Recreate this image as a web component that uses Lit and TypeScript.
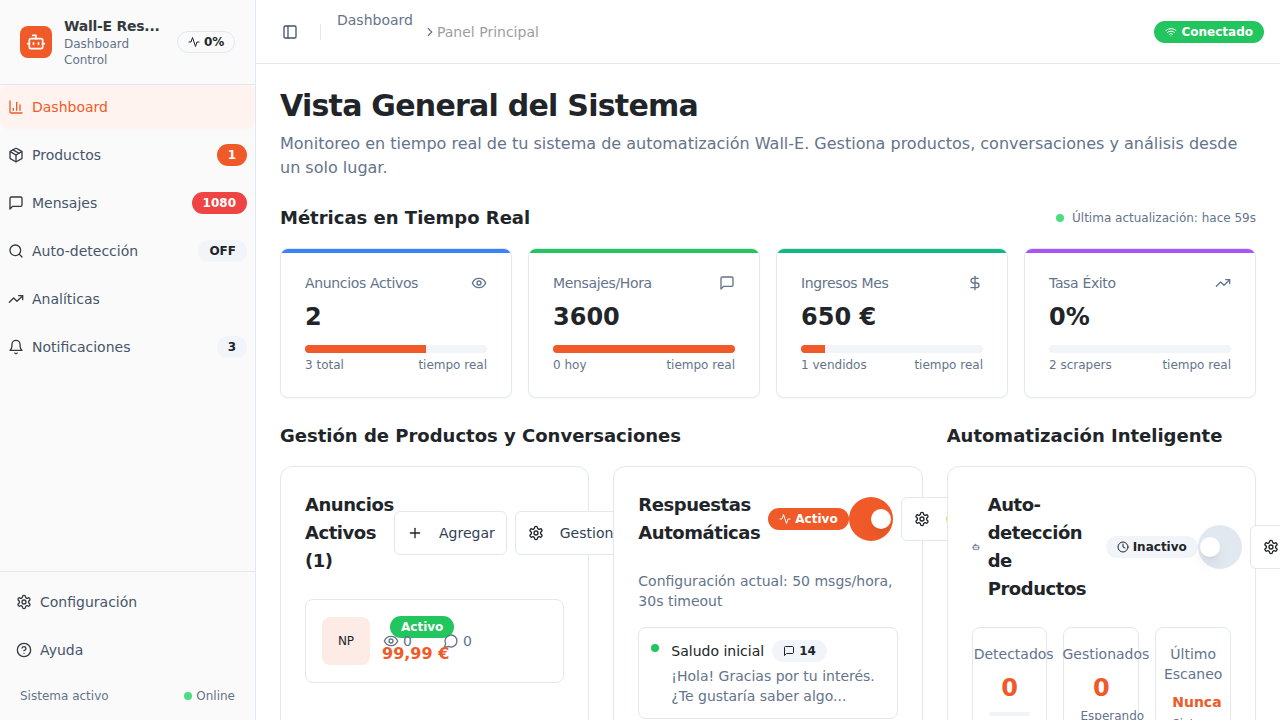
import { LitElement, html, css, svg } from "lit";
import { customElement } from "lit/decorators.js";

const ICONS: Record<string, unknown> = {
  bot: svg`<path d="M12 8V4H8"/><rect width="16" height="12" x="4" y="8" rx="2"/><path d="M2 14h2"/><path d="M20 14h2"/><path d="M15 13v2"/><path d="M9 13v2"/>`,
  activity: svg`<path d="M22 12h-4l-3 9L9 3l-3 9H2"/>`,
  chart: svg`<path d="M3 3v16a2 2 0 0 0 2 2h16"/><path d="M18 17V9"/><path d="M13 17V5"/><path d="M8 17v-3"/>`,
  box: svg`<path d="M11 21.73a2 2 0 0 0 2 0l7-4A2 2 0 0 0 21 16V8a2 2 0 0 0-1-1.73l-7-4a2 2 0 0 0-2 0l-7 4A2 2 0 0 0 3 8v8a2 2 0 0 0 1 1.73z"/><path d="M12 22V12"/><polyline points="3.29 7 12 12 20.71 7"/><path d="m7.5 4.27 9 5.15"/>`,
  msg: svg`<path d="M21 15a2 2 0 0 1-2 2H7l-4 4V5a2 2 0 0 1 2-2h14a2 2 0 0 1 2 2z"/>`,
  round: svg`<path d="M7.9 20A9 9 0 1 0 4 16.1L2 22Z"/>`,
  search: svg`<circle cx="11" cy="11" r="8"/><path d="m21 21-4.3-4.3"/>`,
  trend: svg`<polyline points="22 7 13.5 15.5 8.5 10.5 2 17"/><polyline points="16 7 22 7 22 13"/>`,
  bell: svg`<path d="M6 8a6 6 0 0 1 12 0c0 7 3 9 3 9H3s3-2 3-9"/><path d="M10.3 21a1.94 1.94 0 0 0 3.4 0"/>`,
  gear: svg`<path d="M12.22 2h-.44a2 2 0 0 0-2 2v.18a2 2 0 0 1-1 1.73l-.43.25a2 2 0 0 1-2 0l-.15-.08a2 2 0 0 0-2.73.73l-.22.38a2 2 0 0 0 .73 2.73l.15.1a2 2 0 0 1 1 1.72v.51a2 2 0 0 1-1 1.74l-.15.09a2 2 0 0 0-.73 2.73l.22.38a2 2 0 0 0 2.73.73l.15-.08a2 2 0 0 1 2 0l.43.25a2 2 0 0 1 1 1.73V20a2 2 0 0 0 2 2h.44a2 2 0 0 0 2-2v-.18a2 2 0 0 1 1-1.73l.43-.25a2 2 0 0 1 2 0l.15.08a2 2 0 0 0 2.73-.73l.22-.39a2 2 0 0 0-.73-2.73l-.15-.08a2 2 0 0 1-1-1.74v-.5a2 2 0 0 1 1-1.74l.15-.09a2 2 0 0 0 .73-2.73l-.22-.38a2 2 0 0 0-2.73-.73l-.15.08a2 2 0 0 1-2 0l-.43-.25a2 2 0 0 1-1-1.73V4a2 2 0 0 0-2-2z"/><circle cx="12" cy="12" r="3"/>`,
  help: svg`<circle cx="12" cy="12" r="10"/><path d="M9.09 9a3 3 0 0 1 5.83 1c0 2-3 3-3 3"/><path d="M12 17h.01"/>`,
  panel: svg`<rect width="18" height="18" x="3" y="3" rx="2"/><path d="M9 3v18"/>`,
  chevron: svg`<path d="m9 18 6-6-6-6"/>`,
  wifi: svg`<path d="M12 20h.01"/><path d="M2 8.82a15 15 0 0 1 20 0"/><path d="M5 12.859a10 10 0 0 1 14 0"/><path d="M8.5 16.429a5 5 0 0 1 7 0"/>`,
  eye: svg`<path d="M2 12s3-7 10-7 10 7 10 7-3 7-10 7-10-7-10-7Z"/><circle cx="12" cy="12" r="3"/>`,
  dollar: svg`<line x1="12" x2="12" y1="2" y2="22"/><path d="M17 5H9.5a3.5 3.5 0 0 0 0 7h5a3.5 3.5 0 0 1 0 7H6"/>`,
  plus: svg`<path d="M5 12h14"/><path d="M12 5v14"/>`,
  clock: svg`<circle cx="12" cy="12" r="10"/><polyline points="12 6 12 12 16 14"/>`,
};

const icon = (name: string, size = 16) => html`<svg
  class="icon"
  width=${size}
  height=${size}
  viewBox="0 0 24 24"
  fill="none"
  stroke="currentColor"
  stroke-width="2"
  stroke-linecap="round"
  stroke-linejoin="round"
>${ICONS[name]}</svg>`;

const NAV = [
  { icon: "chart", label: "Dashboard", active: true },
  { icon: "box", label: "Productos", badge: "1", tone: "orange" },
  { icon: "msg", label: "Mensajes", badge: "1080", tone: "red" },
  { icon: "search", label: "Auto-detección", badge: "OFF", tone: "muted" },
  { icon: "trend", label: "Analíticas" },
  { icon: "bell", label: "Notificaciones", badge: "3", tone: "muted" },
];

const METRICS = [
  { label: "Anuncios Activos", icon: "eye", value: "2", pct: 66.67, left: "3 total", top: "blue" },
  { label: "Mensajes/Hora", icon: "msg", value: "3600", pct: 100, left: "0 hoy", top: "green" },
  { label: "Ingresos Mes", icon: "dollar", value: "650 €", pct: 13, left: "1 vendidos", top: "teal" },
  { label: "Tasa Éxito", icon: "trend", value: "0%", pct: 0, left: "2 scrapers", top: "purple" },
];

@customElement("app-root")
export class AppRoot extends LitElement {
  static styles = css`
    :host {
      display: flex;
      width: 1280px;
      height: 720px;
      overflow: hidden;
      background: #fff;
      color: #212529;
      font-family: "DejaVu Sans", sans-serif;
      font-size: 14px;
      line-height: 20px;
    }
    .icon {
      flex: none;
      display: block;
    }

    /* sidebar */
    .sidebar {
      flex: none;
      width: 256px;
      box-sizing: border-box;
      height: 720px;
      background: #fafafa;
      border-right: 1px solid #e2e8f0;
      display: flex;
      flex-direction: column;
    }
    .brand {
      height: 85px;
      box-sizing: border-box;
      border-bottom: 1px solid #e2e8f0;
      padding: 0 20px;
      display: flex;
      align-items: center;
      gap: 12px;
    }
    .logo {
      flex: none;
      width: 32px;
      height: 32px;
      border-radius: 8px;
      background: #f05a28;
      color: #fff;
      display: flex;
      align-items: center;
      justify-content: center;
    }
    .brand-text {
      width: 101px;
      flex: none;
    }
    .brand-name {
      font-weight: 700;
      letter-spacing: -0.25px;
      color: #343a40;
      white-space: nowrap;
    }
    .brand-sub {
      font-size: 12px;
      line-height: 16px;
      color: #64748b;
    }
    .pill {
      flex: none;
      height: 22px;
      box-sizing: border-box;
      border: 1px solid #e2e8f0;
      border-radius: 999px;
      padding: 0 10px;
      display: flex;
      align-items: center;
      gap: 4px;
      font-size: 12px;
      font-weight: 700;
      margin-left: 0;
    }
    .nav {
      display: flex;
      flex-direction: column;
      gap: 4px;
    }
    .nav-row {
      height: 44px;
      display: flex;
      align-items: center;
      gap: 8px;
      padding: 0 8px;
      border-radius: 8px;
      color: #475569;
    }
    .nav-row .icon {
      color: #343a40;
    }
    .nav-row.active {
      background: #fef3ef;
      color: #f05a28;
    }
    .nav-row.active .icon {
      color: #f05a28;
    }
    .nav-label {
      flex: 1;
    }
    .count {
      height: 22px;
      box-sizing: border-box;
      padding: 0 11px;
      border-radius: 999px;
      display: flex;
      align-items: center;
      font-size: 12px;
      font-weight: 700;
    }
    .count.orange {
      background: #f05a28;
      color: #fff;
    }
    .count.red {
      background: #ef4444;
      color: #fff;
    }
    .count.muted {
      background: #f1f5f9;
      color: #212529;
    }
    .side-foot {
      margin-top: auto;
      border-top: 1px solid #e2e8f0;
      padding: 8px 16px 0;
      height: 149px;
      box-sizing: border-box;
    }
    .side-foot .nav-row {
      padding: 0;
    }
    .status {
      margin-top: 4px;
      padding: 0 4px;
      height: 40px;
      display: flex;
      align-items: center;
      justify-content: space-between;
      font-size: 12px;
      color: #64748b;
    }
    .online {
      display: flex;
      align-items: center;
      gap: 4px;
    }
    .dot {
      flex: none;
      width: 8px;
      height: 8px;
      border-radius: 50%;
      background: #4ade80;
    }

    /* top bar */
    .page {
      flex: 1;
      min-width: 0;
      display: flex;
      flex-direction: column;
    }
    .topbar {
      flex: none;
      height: 64px;
      box-sizing: border-box;
      border-bottom: 1px solid #e2e8f0;
      padding: 0 16px 0 26px;
      display: flex;
      align-items: center;
    }
    .topbar > .icon {
      color: #475569;
    }
    .sep {
      width: 1px;
      height: 16px;
      background: #e2e8f0;
      margin: 0 16px 0 22px;
    }
    .crumb {
      color: #64748b;
      align-self: flex-start;
      margin-top: 10px;
    }
    .crumb-next {
      display: flex;
      align-items: center;
      color: #9e9e9e;
      margin-left: 10px;
    }
    .crumb-next .icon {
      color: #64748b;
    }
    .conn {
      margin-left: auto;
      height: 22px;
      padding: 0 11px;
      border-radius: 999px;
      background: #22c55e;
      color: #fff;
      display: flex;
      align-items: center;
      gap: 4px;
      font-size: 12px;
      font-weight: 700;
    }

    /* main */
    .main {
      flex: 1;
      min-height: 0;
      overflow: hidden;
      padding: 24px;
    }
    h1 {
      margin: 0 0 8px;
      font-size: 30px;
      line-height: 36px;
      font-weight: 700;
      letter-spacing: -0.75px;
      color: #212529;
    }
    .lead {
      margin: 0 0 24px;
      font-size: 16px;
      line-height: 24px;
      color: #64748b;
    }
    h2 {
      margin: 0;
      font-size: 18px;
      line-height: 28px;
      font-weight: 700;
      color: #212529;
    }
    .metrics-head {
      display: flex;
      align-items: center;
      justify-content: space-between;
      margin-bottom: 16px;
    }
    .updated {
      display: flex;
      align-items: center;
      gap: 8px;
      font-size: 12px;
      color: #64748b;
    }
    .metrics {
      display: grid;
      grid-template-columns: repeat(4, 1fr);
      gap: 16px;
      margin-bottom: 24px;
    }
    .metric {
      box-sizing: border-box;
      height: 150px;
      overflow: hidden;
      background: #fff;
      border: 1px solid #e2e8f0;
      border-radius: 8px;
      box-shadow: 0 1px 2px rgba(0, 0, 0, 0.04);
    }
    .metric-band {
      height: 4px;
    }
    .metric-band.blue {
      background: #3b82f6;
    }
    .metric-band.green {
      background: #22c55e;
    }
    .metric-band.teal {
      background: #10b981;
    }
    .metric-band.purple {
      background: #a855f7;
    }
    .metric-body {
      padding: 20px 24px 0;
    }
    .metric-head {
      display: flex;
      align-items: center;
      justify-content: space-between;
      color: #64748b;
      letter-spacing: -0.35px;
    }
    .metric-value {
      margin-top: 8px;
      font-size: 24px;
      line-height: 32px;
      font-weight: 700;
      color: #212529;
    }
    .bar {
      margin-top: 12px;
      height: 8px;
      border-radius: 4px;
      background: #f1f5f9;
      overflow: hidden;
    }
    .bar-fill {
      height: 100%;
      background: #f05a28;
    }
    .metric-foot {
      margin-top: 4px;
      display: flex;
      justify-content: space-between;
      font-size: 12px;
      line-height: 16px;
      color: #64748b;
    }
    .columns {
      display: grid;
      grid-template-columns: repeat(3, minmax(0, 1fr));
      gap: 24px;
    }
    .wide {
      grid-column: span 2;
      min-width: 0;
    }
    .col-title {
      margin-bottom: 16px;
    }
    .two {
      display: grid;
      grid-template-columns: repeat(2, minmax(0, 1fr));
      gap: 24px;
    }

    /* cards */
    .card {
      isolation: isolate;
      box-sizing: border-box;
      min-width: 0;
      height: 400px;
      background: #fff;
      border: 1px solid #e2e8f0;
      border-radius: 12px;
      padding: 24px;
    }
    .card-head {
      display: flex;
      align-items: center;
      gap: 8px;
    }
    .card-title {
      flex: none;
      font-size: 18px;
      line-height: 28px;
      font-weight: 700;
      letter-spacing: -0.45px;
      color: #212529;
    }
    .title-ads {
      width: 81px;
    }
    .title-replies {
      width: 123px;
    }
    .btn {
      flex: none;
      height: 44px;
      box-sizing: border-box;
      border: 1px solid #e2e8f0;
      border-radius: 6px;
      background: #fff;
      padding: 0 11px 0 12px;
      display: flex;
      align-items: center;
      gap: 16px;
      white-space: nowrap;
      color: #334155;
    }
    .btn .icon {
      color: #212529;
    }
    .btn-orange {
      color: #f59e0b;
    }
    .tag {
      flex: none;
      height: 22px;
      box-sizing: border-box;
      padding: 0 11px;
      border-radius: 999px;
      display: flex;
      align-items: center;
      gap: 4px;
      font-size: 12px;
      font-weight: 700;
    }
    .tag.on {
      background: #f05a28;
      color: #fff;
    }
    .tag.off {
      background: #f1f5f9;
      color: #212529;
    }
    .toggle {
      flex: none;
      width: 44px;
      height: 44px;
      border-radius: 50%;
      display: flex;
      align-items: center;
    }
    .toggle.on {
      background: #f05a28;
      justify-content: flex-end;
    }
    .toggle.off {
      background: #e2e8f0;
      justify-content: flex-start;
    }
    .thumb {
      width: 20px;
      height: 20px;
      margin: 0 2px;
      border-radius: 50%;
      background: #fff;
      box-shadow: 0 10px 15px -3px rgba(0, 0, 0, 0.1), 0 4px 6px -4px rgba(0, 0, 0, 0.1);
    }
    .tight {
      gap: 0;
    }
    .tight .btn {
      margin-left: 8px;
    }
    .tight .card-title {
      margin-right: 7px;
    }

    /* product card */
    .product {
      margin-top: 24px;
      box-sizing: border-box;
      height: 84px;
      border: 1px solid #e2e8f0;
      border-radius: 8px;
      padding: 16px;
      display: flex;
      align-items: center;
      gap: 12px;
    }
    .thumb-np {
      flex: none;
      width: 48px;
      height: 48px;
      border-radius: 8px;
      background: #fdece6;
      display: flex;
      align-items: center;
      justify-content: center;
      font-size: 12px;
    }
    .product-info {
      height: 50px;
    }
    .product-tag {
      display: inline-flex;
      background: #22c55e;
      color: #fff;
      margin-left: 8px;
      vertical-align: top;
    }
    .stats {
      display: flex;
      align-items: center;
      margin: -7px 0 0 1px;
      color: #64748b;
    }
    .stat {
      width: 60px;
      display: flex;
      align-items: center;
      gap: 4px;
    }
    .price {
      margin-top: -9px;
      font-size: 16px;
      line-height: 24px;
      font-weight: 700;
      color: #f05a28;
    }

    /* rules card */
    .note {
      margin: 24px 0 16px;
      color: #64748b;
    }
    .rule {
      box-sizing: border-box;
      height: 92px;
      border: 1px solid #e2e8f0;
      border-radius: 8px;
      padding: 12px;
      display: flex;
      gap: 12px;
    }
    .rule-dot {
      flex: none;
      width: 8px;
      height: 8px;
      margin-top: 4px;
      border-radius: 50%;
      background: #22c55e;
    }
    .rule-head {
      display: flex;
      align-items: center;
      gap: 8px;
    }
    .rule-text {
      margin-top: 4px;
      color: #64748b;
    }
    .rule-count {
      gap: 4px;
    }

    /* detection card */
    .mini-bot {
      flex: none;
      margin-right: 8px;
      color: #475569;
    }
    .auto-title {
      width: 111px;
    }
    .tiles {
      margin-top: 24px;
      display: grid;
      grid-template-columns: repeat(3, minmax(0, 1fr));
      gap: 16px;
    }
    .tile {
      box-sizing: border-box;
      height: 140px;
      border: 1px solid #e2e8f0;
      border-radius: 8px;
      padding: 16px;
      text-align: center;
    }
    .tile-label {
      color: #64748b;
      white-space: nowrap;
      text-align: left;
    }
    .tile-label.detected {
      margin-left: -15px;
    }
    .tile-label.managed {
      margin-left: -18px;
    }
    .tile-label.wrap {
      margin: 0 -16px;
      white-space: normal;
      text-align: center;
    }
    .tile-num {
      margin-top: 8px;
      font-size: 24px;
      line-height: 32px;
      font-weight: 700;
      color: #f05a28;
    }
    .tile-bar {
      height: 4px;
      margin-top: 8px;
      border-radius: 2px;
      background: #f1f5f9;
    }
    .tile-sub {
      margin-top: 4px;
      font-size: 12px;
      line-height: 16px;
      color: #64748b;
    }
    .tile-strong {
      margin-top: 8px;
      font-weight: 700;
      color: #f05a28;
    }
  `;

  render() {
    return html`
      <aside class="sidebar">
        <div class="brand">
          <div class="logo">${icon("bot", 20)}</div>
          <div class="brand-text">
            <div class="brand-name">Wall-E Res...</div>
            <div class="brand-sub">Dashboard Control</div>
          </div>
          <div class="pill">${icon("activity", 12)}0%</div>
        </div>
        <nav class="nav">
          ${NAV.map(
            (n) => html`<div class="nav-row ${n.active ? "active" : ""}">
              ${icon(n.icon)}
              <span class="nav-label">${n.label}</span>
              ${n.badge ? html`<span class="count ${n.tone}">${n.badge}</span>` : ""}
            </div>`
          )}
        </nav>
        <div class="side-foot">
          <div class="nav">
            <div class="nav-row">${icon("gear")}<span class="nav-label">Configuración</span></div>
            <div class="nav-row">${icon("help")}<span class="nav-label">Ayuda</span></div>
          </div>
          <div class="status">
            <span>Sistema activo</span>
            <span class="online"><span class="dot"></span>Online</span>
          </div>
        </div>
      </aside>

      <div class="page">
        <header class="topbar">
          ${icon("panel")}
          <span class="sep"></span>
          <span class="crumb">Dashboard</span>
          <span class="crumb-next">${icon("chevron", 14)}Panel Principal</span>
          <span class="conn">${icon("wifi", 12)}Conectado</span>
        </header>

        <main class="main">
          <h1>Vista General del Sistema</h1>
          <p class="lead">
            Monitoreo en tiempo real de tu sistema de automatización Wall-E. Gestiona productos,
            conversaciones y análisis desde un solo lugar.
          </p>

          <div class="metrics-head">
            <h2>Métricas en Tiempo Real</h2>
            <span class="updated"><span class="dot"></span>Última actualización: hace 59s</span>
          </div>
          <section class="metrics">
            ${METRICS.map(
              (m) => html`<div class="metric">
                <div class="metric-band ${m.top}"></div>
                <div class="metric-body">
                  <div class="metric-head"><span>${m.label}</span>${icon(m.icon)}</div>
                  <div class="metric-value">${m.value}</div>
                  <div class="bar"><div class="bar-fill" style="width: ${m.pct}%"></div></div>
                  <div class="metric-foot"><span>${m.left}</span><span>tiempo real</span></div>
                </div>
              </div>`
            )}
          </section>

          <section class="columns">
            <div class="wide">
              <h2 class="col-title">Gestión de Productos y Conversaciones</h2>
              <div class="two">
                <div class="card">
                  <div class="card-head">
                    <div class="card-title title-ads">Anuncios Activos (1)</div>
                    <div class="btn">${icon("plus")}Agregar</div>
                    <div class="btn">${icon("gear")}Gestionar</div>
                  </div>
                  <div class="product">
                    <div class="thumb-np">NP</div>
                    <div class="product-info">
                      <span class="tag product-tag">Activo</span>
                      <div class="stats">
                        <span class="stat">${icon("eye")}0</span>
                        <span class="stat">${icon("round")}0</span>
                      </div>
                      <div class="price">99,99 €</div>
                    </div>
                  </div>
                </div>

                <div class="card">
                  <div class="card-head tight">
                    <div class="card-title title-replies">Respuestas Automáticas</div>
                    <span class="tag on">${icon("activity", 12)}Activo</span>
                    <div class="toggle on"><span class="thumb"></span></div>
                    <div class="btn">${icon("gear")}<span class="btn-orange">Configurar</span></div>
                  </div>
                  <p class="note">Configuración actual: 50 msgs/hora, 30s timeout</p>
                  <div class="rule">
                    <span class="rule-dot"></span>
                    <div>
                      <div class="rule-head">
                        <span>Saludo inicial</span>
                        <span class="tag off rule-count">${icon("msg", 12)}14</span>
                      </div>
                      <div class="rule-text">¡Hola! Gracias por tu interés. ¿Te gustaría saber algo...</div>
                    </div>
                  </div>
                </div>
              </div>
            </div>

            <div>
              <h2 class="col-title">Automatización Inteligente</h2>
              <div class="card">
                <div class="card-head tight">
                  <span class="mini-bot">${icon("bot", 8)}</span>
                  <div class="card-title auto-title">Auto-detección de Productos</div>
                  <span class="tag off">${icon("clock", 12)}Inactivo</span>
                  <div class="toggle off"><span class="thumb"></span></div>
                  <div class="btn">${icon("gear")}Configurar</div>
                </div>
                <div class="tiles">
                  <div class="tile">
                    <div class="tile-label detected">Detectados</div>
                    <div class="tile-num">0</div>
                    <div class="tile-bar"></div>
                  </div>
                  <div class="tile">
                    <div class="tile-label managed">Gestionados</div>
                    <div class="tile-num">0</div>
                    <div class="tile-sub">Esperando</div>
                  </div>
                  <div class="tile">
                    <div class="tile-label wrap">Último Escaneo</div>
                    <div class="tile-strong">Nunca</div>
                    <div class="tile-sub">Sistema</div>
                  </div>
                </div>
              </div>
            </div>
          </section>
        </main>
      </div>
    `;
  }
}
